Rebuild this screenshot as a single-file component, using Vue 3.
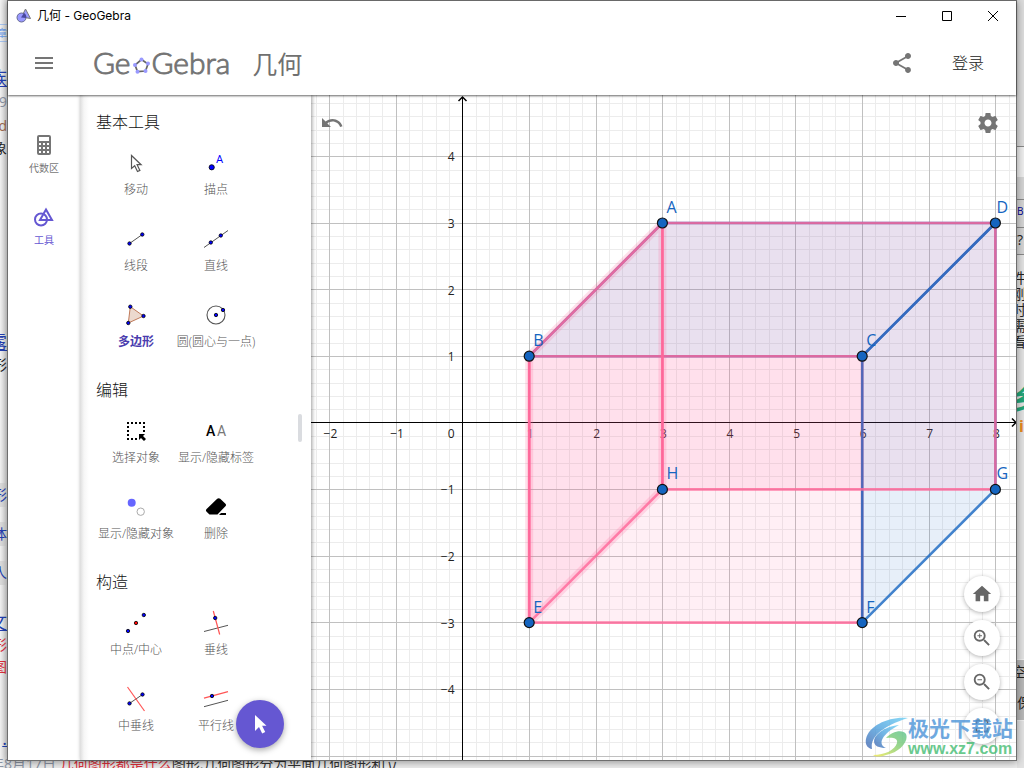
<script setup>
const unit = 66.6
const origin = { x: 151.6, y: 327.8 }
const px = (v) => origin.x + v * unit
const py = (v) => origin.y - v * unit
const snap = (v) => Math.floor(v + 0.3) + 0.5
const axis = { x: snap(origin.x - 0.9), y: snap(origin.y - 0.9) }

const range = (a, b) => Array.from({ length: b - a + 1 }, (_, i) => a + i)
const minorX = range(-12, 120).filter((i) => i % 5).map((i) => snap(px(i / 5)))
const minorY = range(-60, 24).filter((i) => i % 5).map((i) => snap(py(i / 5)))
const majorX = range(-2, 24).filter((i) => i).map((i) => snap(px(i)))
const majorY = range(-12, 4).filter((i) => i).map((i) => snap(py(i)))
const label = (n) => (n < 0 ? '−' + -n : String(n))
const xLabels = range(-2, 24).filter((i) => i).map((n) => ({ text: label(n), x: px(n) + 1 }))
const yLabels = range(-4, 4).filter((i) => i).map((n) => ({ text: label(n), y: py(n) + 5 }))

const points = {
  A: [3, 3], B: [1, 1], C: [6, 1], D: [8, 3],
  E: [1, -3], F: [6, -3], G: [8, -1], H: [3, -1]
}
const labelGap = (n) => ('DG'.includes(n) ? 1 : 4)
const poly = (names) => [...names].map((n) => px(points[n][0]) + ',' + py(points[n][1])).join(' ')
const faces = [
  { names: 'ABCD', tone: 'blue' },
  { names: 'BCFE', tone: 'pink' },
  { names: 'CDGF', tone: 'blue' },
  { names: 'ABEH', tone: 'pink', glow: true },
  { names: 'AHGD', tone: 'pink' }
]

const line = (x1, y1, x2, y2, c = 'ln') => ({ tag: 'line', a: { x1, y1, x2, y2, class: c } })
const dot = (cx, cy, r = 2, c = 'dt') => ({ tag: 'circle', a: { cx, cy, r, class: c } })
const path = (d, c) => ({ tag: 'path', a: { d, class: c } })
const text = (x, y, t, c) => ({ tag: 'text', a: { x, y, class: c }, t })

const sections = [
  {
    title: '基本工具',
    tools: [
      { name: '移动', s: [path('M11.5 8.5v13l3.2-2.8 2.8 5.8 2.4-1.1-2.8-5.7h4z', 'ptr')] },
      { name: '描点', s: [dot(11.7, 20.3, 2.6), text(16, 16, 'A', 'ta')] },
      { name: '线段', s: [line(9.5, 20.5, 22.3, 11.5), dot(9.5, 20.5, 1.7), dot(22.3, 11.5, 1.7)] },
      { name: '直线', s: [line(4, 24.5, 28, 7.5), dot(10.8, 19.5, 1.7), dot(20.8, 12.5, 1.7)] },
      { name: '多边形', active: true, s: [path('M10.3 7.7 23.5 17 8.3 24z', 'tri'), dot(10.3, 7.7, 1.7), dot(23.5, 17, 1.7), dot(8.3, 24, 1.7)] },
      { name: '圆(圆心与一点)', s: [dot(16, 16, 9, 'ring'), dot(16, 16, 1.7), dot(23, 11, 1.7)] }
    ]
  },
  {
    title: '编辑',
    tools: [
      { name: '选择对象', s: [path('M7 8h18M8 11v14M24 11v7M11 24h8', 'dash'), path('M19 19h6l-2 2 3 3-2 2-3-3-2 2z', 'blk')] },
      { name: '显示/隐藏标签', s: [text(6, 21, 'A', 'tk'), text(17, 21, 'A', 'tg')] },
      { name: '显示/隐藏对象', s: [dot(11.7, 11.7, 4, 'lilac'), dot(20.7, 20.7, 3.7, 'hollow')] },
      { name: '删除', s: [path('M17.2 7.8a2.4 2.4 0 0 1 3 0l5 4.6a2 2 0 0 1 0 3L17.5 23.5h-8L6.6 20.7a2 2 0 0 1 0-2.8zM21 22h5v2h-7z', 'blk')] }
    ]
  },
  {
    title: '构造',
    tools: [
      { name: '中点/中心', s: [dot(23.8, 8, 1.7), dot(16, 16, 1.7, 'rd'), dot(8, 24, 1.7)] },
      { name: '垂线', s: [line(4, 24.5, 28, 18.3), line(13.3, 4, 19.7, 27.5, 'rl'), dot(15.2, 11, 1.7)] },
      { name: '中垂线', s: [line(9.5, 20.4, 22.5, 11.5), line(7.5, 4, 24.5, 28, 'rl'), dot(9.5, 20.4, 1.7), dot(22.5, 11.5, 1.7)] },
      { name: '平行线', s: [line(4, 23.7, 28, 17.3), line(4, 15.2, 28, 8.6, 'rl'), dot(12, 13, 1.7)] }
    ]
  }
]

const leftBits = [
  { t: '章', y: 24, c: 'sky' }, { t: '族', y: 68, c: 'link big' }, { t: '月9', y: 94, c: 'dim' },
  { t: 'd', y: 118, c: 'brown' }, { t: '象', y: 140, c: 'ink' }, { t: '露', y: 332, c: 'link big' },
  { t: '形', y: 357, c: 'ink' }, { t: '形', y: 483, c: 'link plate' }, { t: '体', y: 522, c: 'link plate' },
  { t: '人', y: 561, c: 'link plate' }, { t: '文', y: 612, c: 'link big' }, { t: '形', y: 637, c: 'red' },
  { t: '图', y: 659, c: 'red' }, { t: '.', y: 728, c: 'link big' }
]
const rightBits = [
  { t: 'B', y: 203, c: 'navy' }, { t: '?', y: 232, c: 'ink mid' }, { t: '件', y: 270, c: 'ink' }, { t: '刚', y: 286, c: 'ink' },
  { t: '时', y: 302, c: 'ink' }, { t: '需', y: 318, c: 'ink' }, { t: '看', y: 334, c: 'ink' },
  { t: '乡', y: 384, c: 'green' }, { t: 'i', y: 416, c: 'orange' },
  { t: '空', y: 664, c: 'ink' }, { t: '保', y: 695, c: 'ink mid' }
]
const zooms = [
  { name: '标准视图', d: 'M10 20v-6h4v6h5v-8h3L12 3 2 12h3v8z' },
  { name: '放大', d: 'M15.5 14h-.79l-.28-.27A6.47 6.47 0 0 0 16 9.5 6.5 6.5 0 1 0 9.5 16c1.61 0 3.09-.59 4.23-1.57l.27.28v.79l5 4.99L20.49 19l-4.99-5zm-6 0C7.01 14 5 11.99 5 9.5S7.01 5 9.5 5 14 7.01 14 9.5 11.99 14 9.5 14zM12 10h-2v2H9v-2H7V9h2V7h1v2h2z' },
  { name: '缩小', d: 'M15.5 14h-.79l-.28-.27A6.47 6.47 0 0 0 16 9.5 6.5 6.5 0 1 0 9.5 16c1.61 0 3.09-.59 4.23-1.57l.27.28v.79l5 4.99L20.49 19l-4.99-5zm-6 0C7.01 14 5 11.99 5 9.5S7.01 5 9.5 5 14 7.01 14 9.5 11.99 14 9.5 14zM7 9h5v1H7z' },
  { name: '全屏', d: 'M7 14H5v5h5v-2H7v-3zm-2-4h2V7h3V5H5v5zm12 7h-3v2h5v-5h-2v3zM14 5v2h3v3h2V5h-5z' }
]
</script>

<template>
  <div class="desktop">
    <div class="behind left">
      <span v-for="b in leftBits" :key="b.y" :class="b.c" :style="{ top: b.y + 'px' }">{{ b.t }}</span>
    </div>
    <div class="behind right">
      <i class="tray one"></i><i class="tray two"></i><i class="tray three"></i>
      <span v-for="b in rightBits" :key="b.y" :class="b.c" :style="{ top: b.y + 'px' }">{{ b.t }}</span>
    </div>
    <p class="behind bottom"><span class="dim">年8月17日 </span><span class="red">几何图形都是什么</span>图形,几何图形分为平面几何图形和立</p>

    <div class="window">
      <header class="head">
        <div class="titlebar">
          <svg width="16" height="16" viewBox="0 0 16 16">
            <path d="M9.500 1 14.500 10.500 5.500 9z" fill="#9a9aff" stroke="#777" />
            <circle cx="5.500" cy="9.500" r="4.500" fill="#9999ff" stroke="#666a90" />
            <path d="M5 9.500 8 5a4.500 4.500 0 0 1 2 5z" fill="#4848a0" />
          </svg>
          <span class="caption">几何 - GeoGebra</span>
          <button class="win" aria-label="最小化"><svg width="12" height="12"><path d="M1 6.500h10" /></svg></button>
          <button class="win" aria-label="最大化"><svg width="12" height="12"><path d="M1.500 1.500h9v9h-9z" /></svg></button>
          <button class="win" aria-label="关闭"><svg width="12" height="12"><path d="M1 1l10 10M11 1 1 11" /></svg></button>
        </div>
        <div class="toolbar">
          <button class="icon menu" aria-label="菜单"><svg width="24" height="24" viewBox="0 0 24 24"><path d="M3 6h18v2H3zM3 11h18v2H3zM3 16h18v2H3z" /></svg></button>
          <div class="logo">
            <span>Ge</span>
            <svg width="17" height="17" viewBox="0 0 17 17">
              <path d="M8.500 2.500 15 7 12.500 14 4.500 14.500 2 8z" fill="none" stroke="#666" stroke-width="1.700" />
              <g fill="#9999ff"><circle cx="8.500" cy="2.500" r="2" /><circle cx="15" cy="6.500" r="2" /><circle cx="12.500" cy="14" r="2" /><circle cx="4.500" cy="14.700" r="2" /><circle cx="2" cy="8" r="2" /></g>
            </svg>
            <span>Gebra</span>
          </div>
          <h1>几何</h1>
          <button class="icon share" aria-label="分享"><svg width="24" height="24" viewBox="0 0 24 24"><path d="M18 16.080c-.76 0-1.440.3-1.960.77L8.910 12.700c.05-.23.09-.46.09-.7s-.04-.47-.09-.7l7.050-4.110c.54.5 1.250.81 2.040.81 1.660 0 3-1.340 3-3s-1.340-3-3-3-3 1.340-3 3c0 .24.04.47.09.7L8.040 9.810C7.500 9.310 6.790 9 6 9c-1.660 0-3 1.340-3 3s1.340 3 3 3c.79 0 1.500-.31 2.040-.81l7.120 4.160c-.05.21-.08.43-.08.65 0 1.610 1.310 2.920 2.920 2.920s2.920-1.310 2.920-2.920-1.310-2.920-2.920-2.920z" /></svg></button>
          <button class="login">登录</button>
        </div>
      </header>

      <main class="main">
        <nav class="rail">
          <button>
            <svg width="24" height="24" viewBox="0 0 24 24"><path fill="#757575" fill-rule="evenodd" d="M7 2h10a2 2 0 0 1 2 2v16a2 2 0 0 1-2 2H7a2 2 0 0 1-2-2V4a2 2 0 0 1 2-2zM7 4v4h10V4zM7 10v2h2v-2zM11 10v2h2v-2zM15 10v2h2v-2zM7 14v2h2v-2zM11 14v2h2v-2zM15 14v2h2v-2zM7 18v2h2v-2zM11 18v2h2v-2zM15 18v2h2v-2z" /></svg>
            <span>代数区</span>
          </button>
          <button class="on">
            <svg width="24" height="24" viewBox="0 0 24 24" fill="none" stroke="#6557d2" stroke-width="2"><circle cx="9" cy="14.500" r="6" /><path d="M14 4.500 20 15H8z" /></svg>
            <span>工具</span>
          </button>
        </nav>

        <aside class="panel">
          <section v-for="s in sections" :key="s.title">
            <h2>{{ s.title }}</h2>
            <div class="tools">
              <button v-for="t in s.tools" :key="t.name" :class="{ active: t.active }">
                <svg width="32" height="32" viewBox="0 0 32 32">
                  <component :is="e.tag" v-for="(e, i) in t.s" :key="i" v-bind="e.a">{{ e.t }}</component>
                </svg>
                <span>{{ t.name }}</span>
              </button>
            </div>
          </section>
          <i class="thumb"></i>
          <button class="fab" aria-label="移动"><svg width="24" height="24" viewBox="0 0 24 24"><path fill="#fff" d="M7 3v16l4-4 3.200 6.500 3-1.400-3.100-6.400H18.500z" /></svg></button>
        </aside>

        <div class="view">
          <svg class="plot">
            <defs>
              <marker id="arrow" markerUnits="userSpaceOnUse" markerWidth="12" markerHeight="12" refX="8" refY="6" orient="auto"><path d="M4 2l4 4-4 4" fill="none" stroke="#000" stroke-width="1.500" /></marker>
            </defs>
            <g class="minor">
              <line v-for="x in minorX" :key="'x' + x" :x1="x" y1="0" :x2="x" y2="100%" />
              <line v-for="y in minorY" :key="'y' + y" x1="0" :y1="y" x2="100%" :y2="y" />
            </g>
            <g class="major">
              <line v-for="x in majorX" :key="'x' + x" :x1="x" y1="0" :x2="x" y2="100%" />
              <line v-for="y in majorY" :key="'y' + y" x1="0" :y1="y" x2="100%" :y2="y" />
            </g>
            <g class="axis">
              <line x1="0" :y1="axis.y" x2="100%" :y2="axis.y" marker-end="url(#arrow)" />
              <line :x1="axis.x" y1="100%" :x2="axis.x" y2="2" marker-end="url(#arrow)" />
            </g>
            <g class="nums">
              <text v-for="l in xLabels" :key="l.text" :x="l.x" :y="axis.y + 15" text-anchor="middle">{{ l.text }}</text>
              <text v-for="l in yLabels" :key="l.text" :x="axis.x - 8" :y="l.y" text-anchor="end">{{ l.text }}</text>
              <text :x="axis.x - 8" :y="axis.y + 15" text-anchor="end">0</text>
            </g>
            <template v-for="f in faces" :key="f.names">
              <polygon v-if="f.glow" class="glow" :points="poly(f.names)" />
              <polygon class="face" :class="f.tone" :points="poly(f.names)" />
            </template>
            <g v-for="(p, n) in points" :key="n" class="pt">
              <circle :cx="px(p[0])" :cy="py(p[1])" r="5" />
              <text :x="px(p[0]) + labelGap(n)" :y="py(p[1]) - 10">{{ n }}</text>
            </g>
          </svg>
          <button class="icon undo" aria-label="撤销"><svg width="24" height="24" viewBox="0 0 24 24"><path d="M12.500 8c-2.650 0-5.050.99-6.900 2.600L2 7v9h9l-3.620-3.620c1.390-1.160 3.160-1.880 5.120-1.880 3.540 0 6.550 2.310 7.600 5.500l2.370-.78C21.080 11.030 17.150 8 12.500 8z" /></svg></button>
          <button class="icon gear" aria-label="设置"><svg width="24" height="24" viewBox="0 0 24 24"><path d="M19.430 12.980c.04-.32.07-.64.07-.98s-.03-.66-.07-.98l2.110-1.650c.19-.15.24-.42.12-.64l-2-3.460c-.12-.22-.39-.3-.61-.22l-2.490 1c-.52-.4-1.080-.73-1.690-.98l-.38-2.650C14.460 2.180 14.250 2 14 2h-4c-.25 0-.46.18-.49.42l-.38 2.650c-.61.25-1.170.59-1.690.98l-2.490-1c-.23-.09-.49 0-.61.22l-2 3.460c-.13.22-.07.49.12.64l2.110 1.650c-.04.32-.07.65-.07.98s.03.66.07.98l-2.110 1.650c-.19.15-.24.42-.12.64l2 3.460c.12.22.39.3.61.22l2.490-1c.52.4 1.080.73 1.690.98l.38 2.650c.03.24.24.42.49.42h4c.25 0 .46-.18.49-.42l.38-2.650c.61-.25 1.170-.59 1.690-.98l2.490 1c.23.09.49 0 .61-.22l2-3.460c.12-.22.07-.49-.12-.64l-2.110-1.650zM12 15.500c-1.930 0-3.500-1.570-3.500-3.500s1.570-3.500 3.500-3.500 3.500 1.570 3.500 3.500-1.570 3.500-3.500 3.500z" /></svg></button>
          <div class="zooms">
            <button v-for="z in zooms" :key="z.name" :aria-label="z.name"><svg width="22" height="22" viewBox="0 0 24 24"><path :d="z.d" /></svg></button>
          </div>
          <div class="mark">
            <svg width="43" height="42" viewBox="0 0 43 42">
              <defs>
                <linearGradient id="sky" x1="0" y1="1" x2="1" y2="0"><stop offset="0" stop-color="#4266b0" /><stop offset=".5" stop-color="#4fa3df" /><stop offset="1" stop-color="#6cd0f5" /></linearGradient>
                <linearGradient id="leaf" x1="0" y1="1" x2="1" y2="0"><stop offset="0" stop-color="#f3ea4d" /><stop offset=".6" stop-color="#7dcb72" /><stop offset="1" stop-color="#58c18c" /></linearGradient>
              </defs>
              <path fill="url(#sky)" d="M43 1C25-1 4 8 1 22c-1 5 1 9 6 10C5 21 15 10 43 1z" />
              <path fill="url(#sky)" d="M34 8C22 9 10 16 9 24c0 5 5 7 12 7-9-4-4-14 13-23z" />
              <path fill="url(#leaf)" d="M21 21c6-7 17-9 20-4 3 7-6 18-20 21-6 2-10 2-13 0 12 0 22-5 24-12 1-5-4-6-11-5z" />
            </svg>
            <div><b>极光下载站</b><em>www.xz7.com</em></div>
          </div>
        </div>
      </main>
    </div>
  </div>
</template>

<style>
body { margin: 0; overflow: hidden; }
</style>

<style scoped>
* { box-sizing: border-box; }
.desktop { position: relative; display: flex; height: 100vh; padding: 0 7px; padding-bottom: 7px; background: #ececec; overflow: hidden; font-family: "Open Sans", "Noto Sans CJK SC", sans-serif; }
button { border: 0; padding: 0; background: none; font: inherit; color: inherit; display: flex; align-items: center; justify-content: center; }
svg { display: block; flex: none; }
.behind { position: absolute; overflow: hidden; margin: 0; font-size: 14px; line-height: 16px; }
.left { left: 0; top: 0; bottom: 0; width: 7px; background: linear-gradient(90deg, #f4f4f4, #dcdcdc); }
.left span { position: absolute; right: 0; white-space: nowrap; }
.right { right: 0; top: 0; bottom: 0; width: 7px; background: linear-gradient(#dcdcdc 0 146px, #eee 146px 177px, #d4d4d4 177px 254px, #e2e2e2 254px); }
.right span { position: absolute; left: -5px; }
.bottom { left: -10px; right: 0; bottom: 0; height: 10px; line-height: 12px; font-size: 14px; white-space: nowrap; color: #333; }
.tray { position: absolute; left: 0; width: 100%; border: solid #888; border-width: 1px 0; }
.one { top: 146px; height: 54px; }
.two { top: 227px; height: 28px; }
.three { top: 659px; height: 62px; background: #b8b8b8; border-color: #eee; }
.behind .sky { color: #6ea0ee; font-size: 10px; border: solid #a9c6f2; border-width: 1px 0; }
.link { color: #2440b3; }
.big { font-size: 18px; line-height: 20px; text-decoration: underline; }
.plate { background: #ddd; padding: 4px 0; }
.dim { color: #8d95a5; }
.brown { color: #a06a50; }
.red { color: #e0303c; }
.ink { color: #222; }
.behind .mid { left: 0; }
.behind .navy { color: #000090; font-size: 10px; left: 0; }
.behind .green { color: #22a578; font-size: 26px; line-height: 30px; font-weight: 700; }
.behind .orange { color: #e88a20; font-weight: 700; left: 2px; font-size: 16px; line-height: 20px; }

.window { position: relative; flex: 1; min-width: 0; display: flex; flex-direction: column; background: #fff; border: 1px solid #6e6e6e; box-shadow: 0 1px 8px rgba(0, 0, 0, .4); }
.head { position: relative; z-index: 2; background: #fff; box-shadow: 0 1px 2px rgba(0, 0, 0, .6); }
.titlebar { display: flex; align-items: center; height: 29px; padding-left: 8px; }
.caption { flex: 1; padding-left: 5px; font: 12px/16px Inter, "Noto Sans CJK SC", sans-serif; color: #000; }
.win { width: 46px; height: 29px; }
.win svg { fill: none; stroke: #000; }
.toolbar { display: flex; align-items: center; height: 65px; padding: 0 24px; }
.icon { width: 24px; height: 24px; }
.icon svg { fill: #757575; }
.logo { display: flex; align-items: center; margin-left: 37px; padding-bottom: 2px; color: #666; font-family: Lato, sans-serif; font-weight: 300; font-size: 30px; line-height: 36px; -webkit-text-stroke: 1px #777; }
.logo svg { margin: 7px 2px 0; }
h1 { flex: 1; margin: 2px 0 0 22px; font-size: 25px; line-height: 36px; font-weight: 400; color: #707070; }
.login { width: 64px; margin-left: 22px; padding-bottom: 2px; font-size: 16px; font-weight: 300; color: #222; }
.toolbar .login { margin-right: -8px; }
.main { flex: 1; min-height: 0; display: flex; }
.rail { width: 72px; padding-top: 38px; display: flex; flex-direction: column; }
.rail button { flex-direction: column; justify-content: flex-start; height: 72px; font-size: 10px; line-height: 20px; color: #777; }
.rail span { padding-top: 1px; }
.rail .on { color: #6557d2; }
.panel { position: relative; z-index: 1; width: 231px; padding: 7px 0 0 16px; overflow: visible; background: linear-gradient(90deg, #ddd, #f6f6f6 4px, #fff 9px); box-shadow: 1px 0 4px rgba(0, 0, 0, .4); }
h2 { margin: 0; font-size: 16px; line-height: 40px; font-weight: 300; color: #111; }
.tools { display: grid; grid-template-columns: 80px 80px; }
.tools button { flex-direction: column; justify-content: flex-start; height: 76px; padding-top: 5px; font-size: 12px; line-height: 20px; font-weight: 300; color: #555; white-space: nowrap; }
.tools span { padding-top: 1px; }
.tools .active { color: #4a3cae; font-weight: 700; }
.thumb { position: absolute; right: 9px; top: 319px; width: 4px; height: 28px; border-radius: 2px; background: #dadce0; }
.fab { position: absolute; right: 27px; bottom: 12px; width: 48px; height: 48px; border-radius: 50%; background: #6557d2; box-shadow: 0 2px 6px rgba(0, 0, 0, .35); }
.ln { stroke: #555; }
.rl { stroke: #f55; stroke-width: 1.2; }
.dt { fill: #00f; stroke: #000; stroke-width: .8; }
.rd { fill: #f00; stroke: #000; stroke-width: .8; }
.ptr { fill: #fff; stroke: #555; stroke-width: 1.2; }
.tri { fill: #ecd9ce; stroke: #c07a5a; }
.ring { fill: none; stroke: #555; stroke-width: 1.1; }
.dash { fill: none; stroke: #000; stroke-width: 2; stroke-dasharray: 2 2; }
.blk { fill: #000; }
.lilac { fill: #66f; }
.hollow { fill: #fff; stroke: #aaa; }
.ta { fill: #00f; font: 400 11px Roboto, sans-serif; }
.tk { fill: #000; font: 500 14px Roboto, sans-serif; }
.tg { fill: #777; font: 400 14px Roboto, sans-serif; }

.view { position: relative; flex: 1; min-width: 0; overflow: hidden; background: #fff; }
.plot { position: absolute; left: 0; top: 0; width: 100%; height: 100%; }
.minor line { stroke: #ececec; shape-rendering: crispEdges; }
.major line { stroke: #c0c0c0; shape-rendering: crispEdges; }
.axis line { stroke: #000; }
.nums { font-size: 12px; fill: #222; }
.face { stroke-width: 2.6; stroke-opacity: .8; fill-opacity: .1; stroke-linejoin: round; }
.blue { fill: #1565c0; stroke: #1565c0; }
.pink { fill: #f69; stroke: #f69; }
.glow { fill: none; stroke: #f69; stroke-width: 8; stroke-opacity: .2; stroke-linejoin: round; }
.pt circle { fill: #1565c0; stroke: #111; stroke-width: 1.2; }
.pt text { fill: #1565c0; font-size: 16px; }
.undo { position: absolute; left: 9px; top: 16px; }
.gear { position: absolute; right: 16px; top: 16px; }
.zooms { position: absolute; right: 16px; bottom: 16px; display: flex; flex-direction: column; gap: 8px; }
.zooms button { width: 36px; height: 36px; border-radius: 50%; background: #fff; box-shadow: 0 1px 4px rgba(0, 0, 0, .3); }
.zooms svg { fill: #666; }
.mark { position: absolute; right: 3px; bottom: 1px; display: flex; align-items: center; opacity: .8; }
.mark div { display: flex; flex-direction: column; }
.mark b { font-size: 21px; line-height: 22px; color: #4c94d8; }
.mark em { font: 700 16px/20px "Liberation Sans", Arial, sans-serif; color: #45bd73; }
</style>
